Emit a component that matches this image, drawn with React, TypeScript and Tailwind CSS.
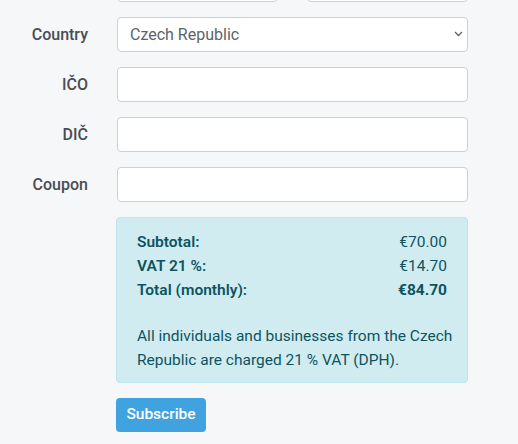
import React from "react";

const font = { fontFamily: "Roboto, 'Open Sans', sans-serif" };

function Field({ label, children }: { label: string; children: React.ReactNode }) {
  return (
    <div className="flex items-center">
      <label className="w-[88px] text-right text-[16px] font-medium text-[#484d53] shrink-0">{label}</label>
      <div className="ml-[29px] w-[351px]">{children}</div>
    </div>
  );
}

export default function App() {
  return (
    <main className="min-h-screen bg-[#f6f7f9] overflow-hidden" style={font}>
      <div className="flex flex-col gap-[15px] -mt-[33px]">
        <div className="flex ml-[117px] gap-[29px]">
          <input className="w-[161px] h-[35px] bg-white border border-[#ccd0d5] rounded-[4px]" />
          <input className="w-[161px] h-[35px] bg-white border border-[#ccd0d5] rounded-[4px]" />
        </div>
        <Field label="Country">
          <div className="relative">
            <select className="w-full h-[35px] appearance-none bg-white border border-[#ccd0d5] rounded-[4px] pl-3 text-[16px] text-[#5b636b] outline-none">
              <option>Czech Republic</option>
            </select>
            <svg className="absolute right-[5px] top-[14px]" width="9" height="6" viewBox="0 0 9 6" fill="none">
              <path d="M1 1l3.5 3.5L8 1" stroke="#5b636b" strokeWidth="1.3" />
            </svg>
          </div>
        </Field>
        <Field label="IČO">
          <input className="w-full h-[35px] bg-white border border-[#ccd0d5] rounded-[4px]" />
        </Field>
        <Field label="DIČ">
          <input className="w-full h-[35px] bg-white border border-[#ccd0d5] rounded-[4px]" />
        </Field>
        <Field label="Coupon">
          <input className="w-full h-[35px] bg-white border border-[#ccd0d5] rounded-[4px]" />
        </Field>
        <div className="ml-[116px] w-[352px] bg-[#d1ecf1] border border-[#bee5eb] rounded-[4px] pl-5 pr-5 pt-[12px] pb-[10px] text-[15.5px] text-[#0c5460] leading-6">
          <div className="flex justify-between font-semibold"><span>Subtotal:</span><span className="font-normal">€70.00</span></div>
          <div className="flex justify-between font-semibold"><span>VAT 21 %:</span><span className="font-normal">€14.70</span></div>
          <div className="flex justify-between font-semibold"><span>Total (monthly):</span><span className="font-bold">€84.70</span></div>
          <p className="mt-[22px] -mr-3 text-[15.5px]">All individuals and businesses from the Czech Republic are charged 21 % VAT (DPH).</p>
        </div>
        <div className="ml-[116px]">
          <button className="w-[90px] h-[34px] bg-[#40a3df] text-white text-[15.5px] font-medium rounded-[4px]">Subscribe</button>
        </div>
      </div>
    </main>
  );
}
